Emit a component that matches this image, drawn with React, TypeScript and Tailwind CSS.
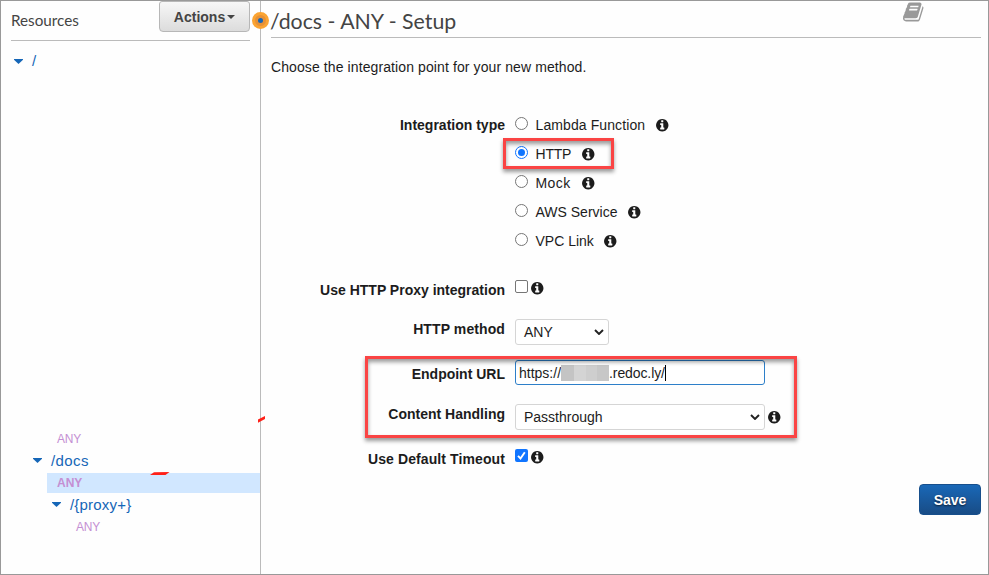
import type { ReactNode } from "react";

function InfoIcon({ className = "" }: { className?: string }) {
  return (
    <svg viewBox="0 0 1792 1792" className={`h-[14.5px] w-[14.5px] shrink-0 fill-[#1c1c1c] ${className}`}>
      <path d="M1152 1376v-160q0-14-9-23t-23-9h-96v-512q0-14-9-23t-23-9h-320q-14 0-23 9t-9 23v160q0 14 9 23t23 9h96v320h-96q-14 0-23 9t-9 23v160q0 14 9 23t23 9h448q14 0 23-9t9-23zm-128-896v-160q0-14-9-23t-23-9h-192q-14 0-23 9t-9 23v160q0 14 9 23t23 9h192q14 0 23-9t9-23zm640 416q0 209-103 385.500t-279.500 279.500-385.500 103-385.500-103-279.500-279.500-103-385.500 103-385.500 279.500-279.500 385.500-103 385.500 103 279.500 279.500 103 385.500z" />
    </svg>
  );
}

function BookIcon() {
  return (
    <svg viewBox="0 0 1792 1792" className="mr-[56px] h-[22px] w-[22px] fill-[#999]">
      <path d="M1639 478q40 57 18 129l-275 906q-19 64-76.500 107.500t-122.500 43.500h-923q-77 0-148.500-53.500t-99.500-131.500q-24-67-2-127 0-4 3-27t4-37q1-8-3-21.500t-3-19.500q2-11 8-21t16.500-23.500 16.500-23.500q23-38 45-91.500t30-91.500q3-10 .5-30t-.5-28q3-11 17-28t17-23q21-36 42-92t25-90q1-9-2.500-32t.5-28q4-13 22-30.500t22-22.500q19-26 42.500-84.500t27.500-96.500q1-8-3-25.500t-2-26.500q2-8 9-18t18-23 17-21q8-12 16.500-30.500t15-35 16-36 19.500-32 26.500-23.500 36-11.500 47.500 5.500l-1 3q38-9 51-9h761q74 0 114 56t18 130l-274 906q-36 119-71.500 153.500t-128.500 34.500h-869q-27 0-38 15-11 16-1 43 24 70 144 70h923q29 0 56-15.500t35-41.500l300-987q7-22 5-57 38 15 59 43zm-1064 2q-4 13 2 22.500t20 9.500h608q13 0 25.500-9.500t16.500-22.500l21-64q4-13-2-22.500t-20-9.500h-608q-13 0-25.500 9.500t-16.500 22.500zm-83 256q-4 13 2 22.500t20 9.500h608q13 0 25.500-9.500t16.500-22.500l21-64q4-13-2-22.500t-20-9.500h-608q-13 0-25.500 9.500t-16.500 22.500z" />
    </svg>
  );
}

function Caret() {
  return (
    <svg viewBox="0 0 9 5" className="h-[5px] w-[9px] shrink-0 fill-[#1566b7]">
      <path d="M0 0h9v.7L4.500 5 0 .7z" />
    </svg>
  );
}

function Chevron() {
  return (
    <svg viewBox="0 0 10 6" className="h-[6px] w-[10px] shrink-0">
      <path d="M1 1l4 4 4-4" fill="none" stroke="#222" strokeWidth="1.900" />
    </svg>
  );
}

function Radio({ checked = false }: { checked?: boolean }) {
  return (
    <span
      className={`flex h-[13px] w-[13px] shrink-0 items-center justify-center rounded-full border bg-white ${
        checked ? "border-[#1075ff]" : "border-[#767676]"
      }`}
    >
      {checked && <span className="h-[7px] w-[7px] rounded-full bg-[#1075ff]" />}
    </span>
  );
}

function Label({ children, className = "" }: { children: ReactNode; className?: string }) {
  return <div className={`w-[234px] shrink-0 text-right font-bold ${className}`}>{children}</div>;
}

const types = [
  { name: "Lambda Function", checked: false, width: "w-[119.5px] tracking-[0.1px]" },
  { name: "HTTP", checked: true, width: "w-[45px] tracking-[-0.2px]" },
  { name: "Mock", checked: false, width: "w-[45px] tracking-[0.4px]" },
  { name: "AWS Service", checked: false, width: "w-[91px]" },
  { name: "VPC Link", checked: false, width: "w-[67.5px]" },
];

function Sidebar() {
  return (
    <aside className="flex w-[260px] shrink-0 flex-col border-r border-[#bbb]">
      <div className="ml-[10px] mr-[10px] flex h-10 items-start justify-between border-b border-[#bbb]">
        <h2 className="mt-[9px] font-['Lato',sans-serif] text-[15.25px] leading-5 text-[#444]">Resources</h2>
        <button className="flex h-[31px] w-[91px] items-center justify-center rounded-b rounded-t-[3px] border border-[#b7b7b7] bg-linear-to-b from-[#f7f7f7] to-[#dcdcdc] pt-px text-[14px] font-bold text-[#444]">
          Actions
          <svg viewBox="0 0 8 4" className="ml-[2px] h-1 w-2 fill-[#444]">
            <path d="M0 0h8L4 4z" />
          </svg>
        </button>
      </div>
      <div className="mt-[10px] flex h-5 items-center pl-[13px] text-[14px] text-[#1566b7]">
        <Caret />
        <span className="ml-[9px] text-[15px]">/</span>
      </div>
      <div className="mt-[357px] flex h-[22px] items-center pl-[56px] text-[12px] tracking-[-0.2px] text-[#c48fd3]">
        ANY
      </div>
      <div className="flex h-[23px] items-center pb-[2px] pl-8 text-[#1566b7]">
        <Caret />
        <span className="ml-[9px] text-[15px] tracking-[0.4px]">/docs</span>
      </div>
      <div className="ml-[46px] flex h-5 items-center bg-[#d1e7ff] pl-[10px] text-[12px] font-bold text-[#c48fd3]">
        ANY
      </div>
      <div className="flex h-[23px] items-center pl-[51px] text-[#1566b7]">
        <Caret />
        <span className="ml-[9px] text-[15px] tracking-[0.2px]">{"/{proxy+}"}</span>
      </div>
      <div className="flex h-[21px] items-center pl-[75px] text-[12px] tracking-[-0.2px] text-[#c48fd3]">ANY</div>
    </aside>
  );
}

export default function App() {
  return (
    <div className="relative flex h-[575px] w-[989px] overflow-hidden border border-[#999] bg-[#fefefe] font-['Liberation_Sans',Arial,sans-serif] text-[14px] leading-5 text-[#1c1c1c]">
      <Sidebar />
      <main className="flex grow flex-col pl-[10px] pr-[7px]">
        <header className="flex h-[37px] items-start justify-between border-b border-[#bbb]">
          <h1 className="-ml-px mt-[5px] font-['Lato',sans-serif] text-[21.3px] leading-[30px] text-[#444]">
            /docs - ANY - Setup
          </h1>
          <BookIcon />
        </header>
        <p className="mt-[19px] tracking-[0.1px]">Choose the integration point for your new method.</p>

        <div className="mt-[33px] flex gap-[10px]">
          <Label className="pt-[5px]">Integration type</Label>
          <div className="flex flex-col">
            {types.map((t) => (
              <div key={t.name} className="flex h-[29px] items-center">
                <span className="pb-[2px]">
                  <Radio checked={t.checked} />
                </span>
                <span className={`ml-[7.5px] whitespace-nowrap ${t.width}`}>{t.name}</span>
                <InfoIcon className="mt-px" />
              </div>
            ))}
          </div>
        </div>

        <div className="mt-[25px] flex h-5 gap-[10px]">
          <Label>Use HTTP Proxy integration</Label>
          <div className="flex items-start">
            <span className="h-[13px] w-[13px] rounded-[2px] border border-[#767676] bg-white" />
            <InfoIcon className="ml-[2px] mt-px" />
          </div>
        </div>

        <div className="mt-[19px] flex h-[26px] gap-[10px]">
          <Label className="tracking-[0.1px]">HTTP method</Label>
          <div className="flex w-[94px] items-center rounded-[3px] border border-[#d5d5d5] bg-white pl-2 pr-1">
            <span className="grow">ANY</span>
            <Chevron />
          </div>
        </div>

        <div className="mt-[15px] flex h-[25px] gap-[10px]">
          <Label className="pt-1">Endpoint URL</Label>
          <div className="flex w-[250px] items-center rounded-[3px] border border-[#2d7fc9] bg-white pl-[3px]">
            <span>https://</span>
            <span className="flex h-4 w-12">
              <span className="w-[13px] bg-[#c4c4c4]" />
              <span className="w-3 bg-[#d4d4d4]" />
              <span className="w-[11px] bg-[#cecece]" />
              <span className="w-3 bg-[#c7c7c7]" />
            </span>
            <span className="tracking-[-0.1px]">.redoc.ly/</span>
            <span className="h-4 w-px bg-black" />
          </div>
        </div>

        <div className="mt-[19px] flex h-[26px] gap-[10px]">
          <Label>Content Handling</Label>
          <div className="flex items-center">
            <div className="flex h-[26px] w-[250px] items-center rounded-[3px] border border-[#d5d5d5] bg-white pl-2 pr-1">
              <span className="grow">Passthrough</span>
              <Chevron />
            </div>
            <InfoIcon className="ml-[2px]" />
          </div>
        </div>

        <div className="mt-[19px] flex h-5 gap-[10px]">
          <Label className="tracking-[0.1px]">Use Default Timeout</Label>
          <div className="flex items-start">
            <span className="flex h-[13px] w-[13px] items-center justify-center rounded-[2px] bg-[#1075ff]">
              <svg viewBox="0 0 13 13" className="h-[13px] w-[13px]">
                <path d="M3 6.800l2.500 2.700L9.800 3.200" fill="none" stroke="#fff" strokeWidth="1.900" />
              </svg>
            </span>
            <InfoIcon className="ml-[2px] mt-px" />
          </div>
        </div>

        <div className="mt-[15px] flex justify-end">
          <button className="h-[31px] w-[62px] rounded-[4px] border border-[#174f8c] bg-linear-to-b from-[#1968b7] to-[#184c86] text-[14px] font-bold text-white [text-shadow:0_1px_2px_#000a]">
            Save
          </button>
        </div>
      </main>

      <span className="absolute left-[251px] top-[11px] flex h-[17px] w-[17px] items-center justify-center rounded-full border-[3px] border-[#fba432] bg-[#e69137]">
        <span className="h-[5px] w-[5px] rounded-full bg-[#1566b7]" />
      </span>
      <div className="absolute left-[502px] top-[137px] h-[31px] w-[111px] border-[3px] border-[#fa4444] shadow-[0_3px_4px_#0006,inset_0_3px_4px_#0006]" />
      <div className="absolute left-[364px] top-[355px] h-[82px] w-[432px] border-[3px] border-[#fa4444] shadow-[0_3px_4px_#0006,inset_0_3px_4px_#0006]" />
      <svg viewBox="0 0 8 7" className="absolute left-[257px] top-[415px] h-[7px] w-2 fill-[#ff2018]">
        <path d="M0 3.500L7 0v3L0 6.800z" />
      </svg>
      <svg viewBox="0 0 20 3" className="absolute left-[149px] top-[471px] h-[3px] w-5 fill-[#ff2018]">
        <path d="M0 3L4 .2 19.500 0l-4 3z" />
      </svg>
    </div>
  );
}
